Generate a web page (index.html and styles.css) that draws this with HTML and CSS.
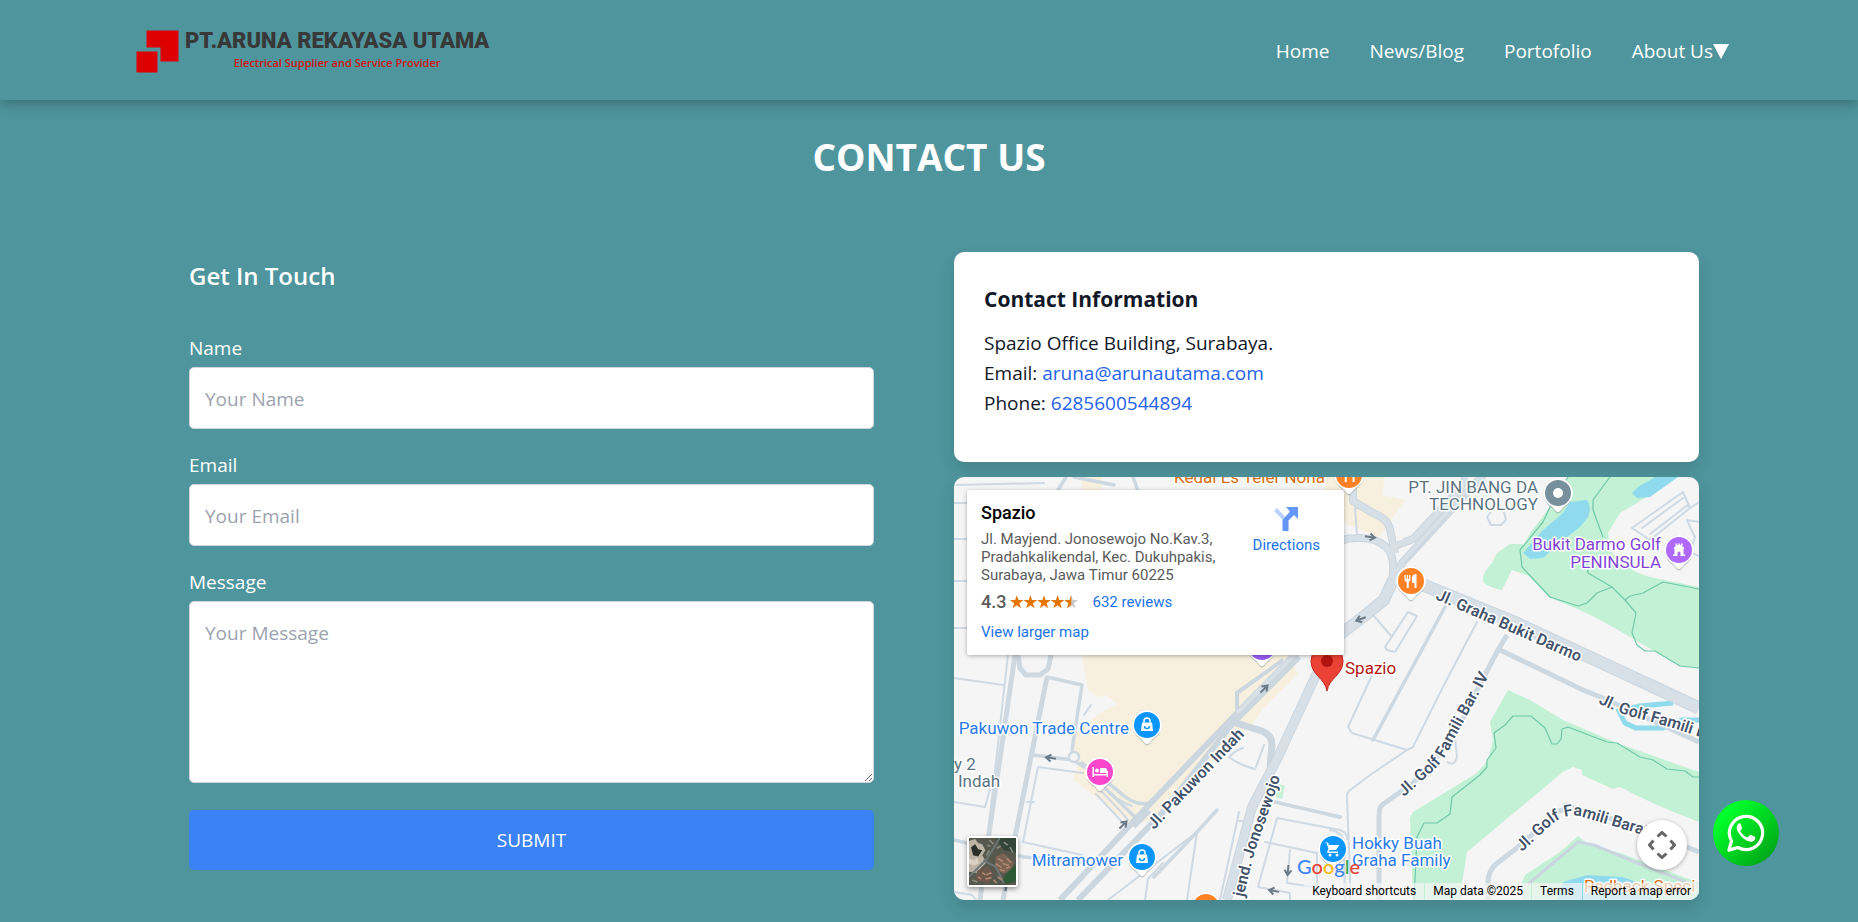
FILE: index.html
```html
<!DOCTYPE html>
<html lang="en">
<head>
    <meta charset="UTF-8">
    <meta name="viewport" content="width=device-width, initial-scale=1.0">
    <title>Contact Us - PT. Aruna Rekayasa Utama</title>
    <link rel="stylesheet" href="styles.css">
</head>
<body>
    <header class="header">
        <div class="header-inner">
            <a href="#" class="logo">
                <svg class="logo-mark" viewBox="0 0 43 43" aria-hidden="true">
                    <path d="M10.500 .5h32v31h-18v-14h-14z" fill="#dd0000"/>
                    <rect x=".5" y="21.500" width="21" height="21" fill="#dd0000"/>
                </svg>
                <span class="logo-text">
                    <span class="logo-name">PT.ARUNA REKAYASA UTAMA</span>
                    <span class="logo-tagline">Electrical Supplier and Service Provider</span>
                </span>
            </a>
            <nav class="nav">
                <a href="#">Home</a>
                <a href="#">News/Blog</a>
                <a href="#">Portofolio</a>
                <a href="#" class="nav-drop">About Us<svg viewBox="0 0 16 15" aria-hidden="true"><path d="M0 0h16L8 15z" fill="#fff"/></svg></a>
            </nav>
        </div>
    </header>

    <main class="container">
        <h1>CONTACT US</h1>
        <div class="grid">
            <section class="form-section">
                <h2>Get In Touch</h2>
                <form>
                    <div class="field">
                        <label for="name">Name</label>
                        <input type="text" id="name" placeholder="Your Name">
                    </div>
                    <div class="field">
                        <label for="email">Email</label>
                        <input type="email" id="email" placeholder="Your Email">
                    </div>
                    <div class="field">
                        <label for="message">Message</label>
                        <textarea id="message" rows="5" placeholder="Your Message"></textarea>
                    </div>
                    <button type="submit" class="submit">SUBMIT</button>
                </form>
            </section>

            <section class="info-section">
                <div class="card">
                    <h3>Contact Information</h3>
                    <p>Spazio Office Building, Surabaya.</p>
                    <p>Email: <a href="mailto:aruna@arunautama.com">aruna@arunautama.com</a></p>
                    <p>Phone: <a href="tel:6285600544894">6285600544894</a></p>
                </div>

                <div class="map">
                    <svg class="map-canvas" viewBox="0 0 745 423" preserveAspectRatio="xMidYMid slice">
                        <defs>
                            <g id="drop">
                                <path d="M0 20.500c-2 0-3-2-5-4.500C-9 13-15 8-15 0a15 15 0 0 1 30 0c0 8-6 13-10 16-2 2.500-3 4.500-5 4.500z" fill="#8a939b" opacity=".45"/>
                                <path d="M0 19c-2 0-3-2-5-4.500C-9 11-15 8-15 0a15 15 0 0 1 30 0c0 8-6 11-10 14.500C3 17 2 19 0 19z" fill="#fff"/>
                            </g>
                            <g id="food" fill="#fff">
                                <path d="M-6.500-6h1.300v4h1V-6h1.300v4h1V-6h1.300v5.500L-2.300 1v6h-2V1l-2.200-1.500zM5.500-7v14h-2V2H1v-5c0-2.500 2-4 4.500-4z"/>
                            </g>
                            <g id="bag">
                                <path d="M-3-2.500v-1.500a3 3 0 0 1 6 0v1.500" fill="none" stroke="#fff" stroke-width="1.500"/>
                                <path d="M-5-2.500H5L6 6H-6z" fill="#fff"/>
                                <path d="M-2.500 1a2.500 2.500 0 0 0 5 0" fill="none" stroke="#0a95ff" stroke-width="1.400"/>
                            </g>
                            <path id="arrow" d="M-5 0H3M0-3.500L5 0 0 3.500" fill="none" stroke="#6b7a86" stroke-width="2"/>
                            <path id="st-graha" d="M481 122L650 196"/>
                            <path id="st-golf" d="M644 226Q665 237 690 243T770 268"/>
                            <path id="st-bar" d="M450 320L480 293Q492 282 499 264L543 184"/>
                            <path id="st-barat" d="M568 375L597 348Q613 334 632 341L720 367"/>
                            <path id="st-pakuwon" d="M200 353L302 246"/>
                            <path id="st-jono" d="M284 450Q294 395 304 365Q317 330 326 300"/>
                        </defs>

                        <rect width="745" height="423" fill="#f5f5f5"/>

                        <!-- commercial areas -->
                        <g fill="#f8f0df">
                            <path d="M129 170V183L134 213 144 220 153 218 163 227 146 236 123 256 119 276 124 288 119 302 176 347 197 344 299 246 308 233 344 196 330 170z"/>
                            <path d="M372 0H431L428 18 451 23 425 60 370 38z"/>
                            <path d="M128 0h20v14h-20z"/>
                        </g>

                        <!-- parks and golf course -->
                        <g fill="#c3f1d5">
                            <path d="M614 0H724L693 20 666 36 654 56 656 73Q672 94 696 100L745 110V191L726 189 676 160Q640 138 609 126L596 121 569 93 566 76 576 56 596 30z"/>
                            <path d="M569 67H556L543 76 538 86Q528 96 529 104 530 109 548 113L558 93 575 99z"/>
                            <path d="M554 213L576 223 609 243 663 266 745 295V345Q700 328 666 310L659 312 628 298V293L619 290 609 295 513 375 508 406 507 423H459L456 341 459 335 523 296 534 283 539 263 536 245z"/>
                            <path d="M624 359L633 366 669 377 745 406V423H569L568 405 571 398 606 375z"/>
                            <path d="M325 307l6 2-3 13-7-2z"/>
                        </g>

                        <!-- water -->
                        <g fill="#90daee">
                            <path d="M633 23Q638 30 634 40L626 50 609 63 589 81 576 82 569 76 589 53 609 36 616 25z"/>
                            <path d="M678 16L684 10 701 0H724L696 20 683 21z"/>
                            <path d="M603 423L609 405 633 398 669 400 696 410 698 423z"/>
                        </g>
                        <path d="M719 226L686 229 665 234 671 246 682 251H709L728 243H745" fill="none" stroke="#90daee" stroke-width="5"/>

                        <!-- golf paths -->
                        <g fill="none" stroke="#6fc9a9" stroke-width="1.200" stroke-linejoin="round">
                            <path d="M596 30L589 45 566 73 568 90 596 120 624 129 633 126 643 116 658 110 634 96 632 80"/>
                            <path d="M614 0L596 30M656 0L639 23V33L649 60"/>
                            <path d="M658 110L671 123 682 136 678 156 683 168 691 174H701L726 189 745 191"/>
                            <path d="M671 123L676 119 689 116 709 105 745 112"/>
                            <path d="M745 300H739L731 294 713 292 699 283 686 280 663 266 653 265 614 250 608 252 607 262 603 267H598L591 251 577 239H559L551 248 540 256 542 271 533 283V290L526 298 498 320 496 337 483 346H470L463 360 460 423"/>
                        </g>

                        <!-- minor roads -->
                        <g fill="none" stroke="#cfd9e3" stroke-width="2" stroke-linejoin="round" stroke-linecap="round">
                            <path d="M0 201L49 208M54 178L34 356M0 26h14M0 62h14M0 104h14M0 151h14M3 8L90 6"/>
                            <path d="M0 325L31 330 36 312M0 415L18 418 22 423"/>
                            <path d="M84 290L129 296M84 290L69 365 128 378M73 325h7"/>
                            <path d="M130 238L137 228M154 423L243 355M243 355L233 423M266 423L285 335M191 423L194 402 209 386"/>
                            <path d="M146 313Q165 332 174 343M142 317L170 347M134 296Q158 322 178 329"/>
                            <path d="M275 280Q283 272 289 271M275 280Q285 288 301 292M310 268L302 290"/>
                            <path d="M323 341L386 353Q394 356 393 362M323 341L304 410 336 416V423M311 365L363 376V410M336 373L333 406 360 410"/>
                            <path d="M285 344h5"/>
                            <path d="M419 196L394 250 398 256 453 273M459 270L453 273 419 296 396 313Q392 316 393 322L396 396V423"/>
                            <path d="M376 353Q389 355 390 366L391 423"/>
                            <path d="M523 145L489 210 459 270"/>
                            <path d="M419 138L438 160M454 135L431 170 433 173 441 175 463 139z"/>
                            <path d="M537 35L533 40 537 48 547 48 552 43 550 35"/>
                            <path d="M729 15L678 51 696 63 736 31M729 15L736 31 745 25M688 51L729 21M696 57L735 27M745 45L733 43 736 50 741 60 736 75 745 79"/>
                            <path d="M501 262L503 280Q500 290 494 285M609 327Q616 325 620 330"/>
                            <path d="M401 30L403 58M401 30L410 33"/>
                        </g>
                        <path d="M573 408L624 365 640 368 676 383 745 410" fill="none" stroke="#cbd5df" stroke-width="3"/>
                        <g fill="none" stroke="#cdd8e1" stroke-width="3.500" stroke-linejoin="round" stroke-linecap="round">
                            <path d="M93 200L128 208 118 273M79 278L119 283M119 283L130 290"/>
                            <path d="M491 130L419 263M321 325L386 340M263 333L243 355 200 400"/>
                            <path d="M376 338L386 340M104 13L112 0M120 0L160 8M179 0L184 14"/>
                            <path d="M0 363L70 380 128 385"/>
                            <path d="M128 286L163 313Q180 330 196 326M150 310L182 341"/>
                        </g>
                        <circle cx="120" cy="280" r="5" fill="#f5f5f5" stroke="#cdd8e1" stroke-width="2.500"/>
                        <g fill="none" stroke="#cdd8e1" stroke-width="5" stroke-linejoin="round">
                            <path d="M61 178L33 370 26 423M93 200L63 350 49 423"/>
                            <path d="M64 178L66 191 72 198 86 198 94 192 97 178"/>
                            <path d="M553 158L544 173 523 213 499 262 459 306 428 328Q425 331 425 340V423"/>
                            <path d="M546 173L629 213 649 221 745 265"/>
                            <path d="M534 423V406Q534 394 542 387L563 371 601 337Q609 330 621 333L663 343 745 375"/>
                        </g>

                        <!-- main roads -->
                        <g fill="none" stroke="#cbd6df" stroke-linejoin="round">
                            <path d="M106 423L193 330 283 236 339 179 376 146" stroke-width="6"/>
                            <path d="M124 423L209 335 279 246 345 180" stroke-width="6"/>
                            <path d="M180 350L196 334M283 233V216L329 183" stroke-width="4"/>
                            <path d="M279 245L308 254Q318 258 318 268L316 290" stroke-width="7"/>
                            <path d="M376 170L363 196 324 280 298 330 273 423" stroke-width="10"/>
                            <path d="M439 103L430 123 409 140 376 165" stroke-width="12"/>
                            <path d="M370 70Q388 61 403 61 422 60 432 70 442 80 438 103" stroke-width="8"/>
                            <path d="M399 0V24L419 36Q434 42 436 52L441 76M441 69L459 62 505 13 512 0" stroke-width="8"/>
                            <path d="M440 103L448 86 531 -4" stroke-width="8"/>
                            <path d="M457 103L560 145 745 231" stroke-width="13"/>
                        </g>
                        <g fill="none" stroke="#d7dfe7" stroke-linejoin="round">
                            <path d="M376 170L363 196 324 280 298 330 273 423" stroke-width="8"/>
                            <path d="M283 236L339 179 376 146" stroke-width="4"/>
                            <path d="M439 103L430 123 409 140 376 165" stroke-width="10"/>
                            <path d="M370 70Q388 61 403 61 422 60 432 70 442 80 438 103" stroke-width="6"/>
                            <path d="M399 0V24L419 36Q434 42 436 52L441 76M441 69L459 62 505 13 512 0" stroke-width="6"/>
                            <path d="M440 103L448 86 531 -4" stroke-width="6"/>
                            <path d="M457 103L560 145 745 231" stroke-width="11"/>
                        </g>
                        <path d="M451 86L519 10" stroke="#c2cedb" fill="none"/>
                        <path d="M443 55L449 63 442 64z" fill="#f5f5f5"/>

                        <use href="#arrow" transform="translate(416 60) rotate(8)"/>
                        <use href="#arrow" transform="translate(407 142) rotate(160)"/>
                        <use href="#arrow" transform="translate(310 212) rotate(-45)"/>
                        <use href="#arrow" transform="translate(169 348) rotate(-45)"/>
                        <use href="#arrow" transform="translate(97 281) rotate(188)"/>
                        <use href="#arrow" transform="translate(334 393) rotate(95)"/>
                        <use href="#arrow" transform="translate(320 414) rotate(190)"/>
                        <use href="#arrow" transform="translate(52 409) rotate(-85)"/>

                        <!-- street names -->
                        <g class="street">
                            <text><textPath href="#st-graha">Jl. Graha Bukit Darmo</textPath></text>
                            <text><textPath href="#st-golf">Jl. Golf Famili Barat</textPath></text>
                            <text><textPath href="#st-bar">Jl. Golf Famili Bar. IV</textPath></text>
                            <text><textPath href="#st-barat">Jl. Golf Famili Barat</textPath></text>
                            <text><textPath href="#st-pakuwon">Jl. Pakuwon Indah</textPath></text>
                            <text text-anchor="end"><textPath href="#st-jono" startOffset="100%">jend. Jonosewojo</textPath></text>
                        </g>

                        <!-- places -->
                        <g class="place">
                            <g transform="translate(308 170)"><use href="#drop"/><circle r="13" fill="#9a5cf5"/></g>
                            <g transform="translate(395 -2)"><use href="#drop"/><circle r="13" fill="#ff8126"/><use href="#food"/></g>
                            <g transform="translate(457 104)"><use href="#drop"/><circle r="13" fill="#ff8126"/><use href="#food"/></g>
                            <g transform="translate(252 430)"><use href="#drop"/><circle r="13" fill="#ff8126"/><use href="#food"/></g>
                            <g transform="translate(604 16)"><use href="#drop"/><circle r="13" fill="#78909c"/><circle r="5" fill="#fff"/></g>
                            <g transform="translate(725 73)"><use href="#drop"/><circle r="13" fill="#b068ff"/><path d="M-6 6V4.500h1.500V-1H-5v-2h1.500v-3.500h1.500V-5h1.200v-1.500h1.600V-5H2v-1.500h1.500V-3H5v2h-.5v5.500H6V6H1.500V3a1.500 1.500 0 0 0-3 0v3z" fill="#fff"/></g>
                            <g transform="translate(193 248)"><use href="#drop"/><circle r="13" fill="#0a95ff"/><use href="#bag"/></g>
                            <g transform="translate(188 380)"><use href="#drop"/><circle r="13" fill="#0a95ff"/><use href="#bag"/></g>
                            <g transform="translate(146 295)"><use href="#drop"/><circle r="13" fill="#f946cb"/><path d="M-7.500-5h1.500V2H6.500v-3H8v6H6.500V3.500H-6V5h-1.500zM0-4h5a2 2 0 0 1 2 2v3H0z" fill="#fff"/><circle cx="-3" cy="-1.500" r="2" fill="#fff"/></g>
                            <g transform="translate(379 372)"><use href="#drop"/><circle r="13" fill="#0a95ff"/><path d="M-8-6.500h3L-4-4H6.500L4-.5 3 1h-6.500l-.8 1.500H5V4h-9.500q-2 0-1-2l1-2.500-2-5.500H-8z" fill="#fff"/><circle cx="-3" cy="6" r="1.500" fill="#fff"/><circle cx="4" cy="6" r="1.500" fill="#fff"/></g>
                            <path d="M373 214c-2-13-16-16-16-30a16 16 0 0 1 32 0c0 14-14 17-16 30z" fill="#ea4335" stroke="#c5221f"/>
                            <circle cx="373" cy="184" r="6" fill="#b31412"/>

                            <text x="220" y="6" fill="#d56e0c">Kedai Es Teler Nona</text>
                            <text x="584" y="16" text-anchor="end" fill="#5b7482">PT. JIN BANG DA</text>
                            <text x="584" y="33" text-anchor="end" fill="#5b7482">TECHNOLOGY</text>
                            <text x="707" y="73" text-anchor="end" fill="#8344d6">Bukit Darmo Golf</text>
                            <text x="707" y="91" text-anchor="end" fill="#8344d6">PENINSULA</text>
                            <text x="391" y="197" fill="#b31412">Spazio</text>
                            <text x="175" y="257" text-anchor="end" fill="#2a7be8">Pakuwon Trade Centre</text>
                            <text x="169" y="389" text-anchor="end" fill="#2a7be8">Mitramower</text>
                            <text x="398" y="372" fill="#2a7be8">Hokky Buah</text>
                            <text x="398" y="389" fill="#2a7be8">Graha Family</text>
                            <text x="0" y="293" fill="#5b7482">y 2</text>
                            <text x="4" y="310" fill="#5b7482">Indah</text>
                            <text x="630" y="415" fill="#d56e0c">Redback Speci</text>
                        </g>
                        <text class="google" x="343" y="397"><tspan fill="#4285f4">G</tspan><tspan fill="#ea4335">o</tspan><tspan fill="#fbbc04">o</tspan><tspan fill="#4285f4">g</tspan><tspan fill="#34a853">l</tspan><tspan fill="#ea4335">e</tspan></text>
                    </svg>

                    <div class="place-card">
                        <div class="place-desc">
                            <div class="place-name">Spazio</div>
                            <div class="place-address">Jl. Mayjend. Jonosewojo No.Kav.3, Pradahkalikendal, Kec. Dukuhpakis, Surabaya, Jawa Timur 60225</div>
                            <div class="place-rating">
                                <span class="score">4.3</span>
                                <svg class="stars" viewBox="0 0 70 14" aria-hidden="true">
                                    <defs><path id="star" d="M7 0l1.700 5H14L9.700 8.200 11.300 13.500 7 10.300 2.700 13.500 4.300 8.200 0 5h5.300z"/></defs>
                                    <g fill="#e77400">
                                        <use href="#star"/><use href="#star" x="14"/><use href="#star" x="28"/><use href="#star" x="42"/>
                                        <use href="#star" x="56" fill="#c8c8c8"/>
                                        <path d="M63 0v10.300l-4.300 3.200 1.600-5.300L56 5h5.300z"/>
                                    </g>
                                </svg>
                                <a href="#">632 reviews</a>
                            </div>
                            <a href="#">View larger map</a>
                        </div>
                        <a href="#" class="directions">
                            <svg viewBox="0 0 24 24" aria-hidden="true">
                                <path d="M3 1L0 4l9 9v2l4-3z" fill="#b9d0fd"/>
                                <path d="M12 0h12v12l-4-4-5.500 5.500V24h-6V13l7.500-8.500z" fill="#6496fa"/>
                            </svg>
                            Directions
                        </a>
                    </div>

                    <button type="button" class="satellite" aria-label="Show satellite imagery">
                        <svg viewBox="0 0 46 46" aria-hidden="true">
                            <rect width="46" height="46" fill="#56584d"/>
                            <path d="M0 3l6-2 3 4 4 1 3 6-3 5 4 7-6 6-4 4-7-1z" fill="#bdb4a5"/>
                            <path d="M2 9l4-3 3 5 4 1-4 6-5-1z" fill="#2c3029"/>
                            <path d="M0 20l5 2 3-3 2 6-5 2-5-2z" fill="#d9d1c4"/>
                            <path d="M26 0h20v14L34 12z" fill="#34453a"/>
                            <path d="M26 18l8-3 10 9-3 8-7 3-8-5z" fill="#7c6353"/>
                            <path d="M8 32l10-4 6 7-4 9-14-2z" fill="#6b584a"/>
                            <path d="M38 33l8-7v16l-9 3-5-4z" fill="#2f5a36"/>
                            <path d="M0 38L18 20 30 0M14 22l12 6 8 16" fill="none" stroke="#6f7577" stroke-width="2"/>
                            <path d="M17 36l5-2M16 40l6-1M28 20l5 3M33 25l6 2M26 25l6 4M13 34l3 2M37 20l4 4M28 38l4 3M9 38l3 2M30 31l5 1M36 30l4-2M24 41l3 3" stroke="#b28a73" stroke-width="1.500"/>
                            <path d="M20 2l4 4M34 4l4 3M40 9l3 5M20 12l-3 5M3 33l5 1M3 41l5 2M27 10l4-2M18 7l3 1" stroke="#8b9183" stroke-width="1.500"/>
                        </svg>
                    </button>
                    <button type="button" class="camera" aria-label="Map camera controls">
                        <svg viewBox="0 0 28 28" fill="none" stroke="#666" stroke-width="3" aria-hidden="true">
                            <path d="M9.500 5.500L14 1.500l4.500 4M9.500 22.500l4.500 4 4.500-4M5.500 9.500L1.500 14l4 4.500M22.500 9.500l4 4.500-4 4.500"/>
                        </svg>
                    </button>
                    <div class="attribution">
                        <a href="#">Keyboard shortcuts</a>
                        <span>Map data ©2025</span>
                        <a href="#">Terms</a>
                        <a href="#">Report a map error</a>
                    </div>
                </div>
            </section>
        </div>
    </main>

    <a href="https://wa.me/6285600544894" class="whatsapp" aria-label="WhatsApp">
        <svg viewBox="0 0 40 40" aria-hidden="true">
            <path d="M2 38l2.700-9.500A17.500 17.500 0 1 1 11.500 35.300z" fill="none" stroke="#fff" stroke-width="3.400" stroke-linejoin="round"/>
            <path d="M14.500 10.500c-.8-1.200-2-1-3 .2-1.800 2-1.700 4.800-.2 7.600 3 5.500 7 9.200 12.500 10.700 3 .8 5.500-.8 6-3.500.2-1-.2-1.400-1-1.800l-3.500-1.700c-.8-.3-1.200-.1-1.700.5l-1.300 1.700c-.4.500-.8.500-1.400.2-3-1.300-5.200-3.300-6.700-6-.3-.6-.2-.9.200-1.300l1.200-1.500c.3-.5.300-.9.100-1.400z" fill="#fff"/>
        </svg>
    </a>
</body>
</html>
```
FILE: styles.css
```css
* {
    box-sizing: border-box;
}
body {
    margin: 0;
    min-height: 100vh;
    background-color: #4f959d;
    color: white;
    font-family: "Open Sans", sans-serif;
    font-size: 19px;
    line-height: 30px;
}
a {
    text-decoration: none;
}
h1, h2, h3, p {
    margin: 0;
}
.header {
    height: 100px;
    padding: 2px 30px 0;
    box-shadow: 0 4px 12px rgba(0, 0, 0, 0.25);
}
.header-inner {
    display: flex;
    justify-content: space-between;
    align-items: center;
    max-width: 1600px;
    height: 100%;
    margin: 0 auto;
}
.logo {
    display: flex;
    align-items: center;
    gap: 6px;
    padding-left: 7px;
    color: #383838;
}
.logo-mark {
    width: 43px;
    height: 43px;
}
.logo-text {
    display: flex;
    flex-direction: column;
    align-items: center;
    font-family: Roboto, sans-serif;
}
.logo-name {
    font-size: 22px;
    font-weight: 900;
    line-height: 24px;
}
.logo-tagline {
    color: #d31212;
    font-family: "Open Sans", sans-serif;
    font-size: 11px;
    font-weight: 600;
    line-height: 20px;
}
.nav {
    display: flex;
    gap: 40px;
}
.nav a {
    color: white;
    font-weight: 500;
}
.nav-drop {
    display: flex;
    align-items: center;
}
.nav-drop svg {
    width: 16px;
    height: 15px;
}
.container {
    max-width: 1600px;
    margin: 0 auto;
    padding: 32px 30px 20px;
}
h1 {
    margin-bottom: 70px;
    text-align: center;
    font-size: 37px;
    font-weight: 700;
    line-height: 50px;
}
.grid {
    display: grid;
    grid-template-columns: 1fr 1fr;
    gap: 50px;
}
.form-section {
    padding: 6px 30px;
}
h2 {
    margin-bottom: 40px;
    font-size: 24px;
    font-weight: 600;
    line-height: 35px;
}
.field {
    margin-bottom: 21px;
}
.field label {
    display: block;
    margin-bottom: 4px;
    font-weight: 500;
}
.field input, .field textarea {
    display: block;
    width: 100%;
    padding: 16px 15px 14px;
    border: 1px solid #d1d5db;
    border-radius: 5px;
    background-color: white;
    color: #111827;
    font: inherit;
}
.field input {
    height: 62px;
}
.field ::placeholder {
    color: #9ca3af;
    opacity: 1;
}
.submit {
    width: 100%;
    height: 60px;
    margin-top: 6px;
    border: none;
    border-radius: 5px;
    background-color: #3b82f6;
    color: white;
    font: inherit;
    cursor: pointer;
}
.submit:hover {
    background-color: #2563eb;
}
.info-section {
    display: flex;
    flex-direction: column;
    gap: 15px;
}
.card {
    padding: 30px 30px 44px;
    border-radius: 10px;
    background-color: white;
    color: #111827;
    box-shadow: 0 8px 16px rgba(0, 0, 0, 0.12);
}
.card a {
    color: #2563eb;
}
h3 {
    margin-bottom: 11px;
    font-size: 21px;
    font-weight: 700;
    line-height: 35px;
}

/* Map */
.map {
    position: relative;
    height: 423px;
    overflow: hidden;
    border-radius: 10px;
    box-shadow: 0 8px 16px rgba(0, 0, 0, 0.12);
    font-family: Roboto, sans-serif;
}
.map a {
    color: #1a73e8;
}
.map-canvas {
    display: block;
    width: 100%;
    height: 100%;
}
.street text, .place text {
    paint-order: stroke;
    stroke: white;
    stroke-width: 3px;
    stroke-linejoin: round;
}
.street text {
    fill: #43536a;
    font-size: 16px;
    font-weight: 600;
}
.place text {
    font-size: 17px;
}
.google {
    font-family: Lato, sans-serif;
    font-size: 20px;
    font-weight: 500;
}
.place-card {
    position: absolute;
    top: 13px;
    left: 13px;
    display: flex;
    justify-content: space-between;
    width: 377px;
    height: 165px;
    padding: 13px 24px 0 14px;
    border-radius: 2px;
    background-color: white;
    box-shadow: 0 1px 4px rgba(0, 0, 0, 0.3);
    color: #5b5b5b;
    font-size: 15px;
    line-height: 18px;
}
.place-desc {
    width: 245px;
}
.place-name {
    margin-bottom: 7px;
    color: black;
    font-size: 18px;
    font-weight: 500;
    line-height: 20px;
}
.place-rating {
    display: flex;
    align-items: center;
    margin: 9px 0 12px;
}
.score {
    font-size: 18px;
    font-weight: 500;
}
.stars {
    width: 68px;
    height: 14px;
    margin: 0 14px 0 4px;
}
.directions {
    display: flex;
    flex-direction: column;
    align-items: center;
    gap: 5px;
    padding-top: 4px;
}
.directions svg {
    width: 24px;
    height: 24px;
}
.satellite {
    position: absolute;
    left: 13px;
    bottom: 13px;
    width: 51px;
    height: 51px;
    padding: 0;
    border: 2px solid white;
    border-radius: 3px;
    background-color: white;
    box-shadow: 0 2px 5px rgba(0, 0, 0, 0.4);
}
.satellite svg {
    display: block;
    width: 100%;
    height: 100%;
}
.camera {
    position: absolute;
    right: 12px;
    bottom: 30px;
    display: flex;
    justify-content: center;
    align-items: center;
    width: 50px;
    height: 50px;
    padding: 0;
    border: none;
    border-radius: 50%;
    background-color: white;
    box-shadow: 0 1px 4px rgba(0, 0, 0, 0.3);
}
.camera svg {
    width: 28px;
    height: 28px;
}
.attribution {
    position: absolute;
    right: 0;
    bottom: 0;
    display: flex;
    gap: 1px;
    font-size: 12px;
    line-height: 17px;
}
.attribution a, .attribution span {
    padding: 0 8px;
    background-color: rgba(245, 245, 245, 0.7);
    color: black;
}

/* WhatsApp floating button */
.whatsapp {
    position: fixed;
    right: 79px;
    bottom: 56px;
    display: flex;
    justify-content: center;
    align-items: center;
    width: 66px;
    height: 66px;
    border-radius: 50%;
    background: linear-gradient(135deg, #00ff2b 20%, #00a317 90%);
}
.whatsapp svg {
    width: 38px;
    height: 38px;
}
```
